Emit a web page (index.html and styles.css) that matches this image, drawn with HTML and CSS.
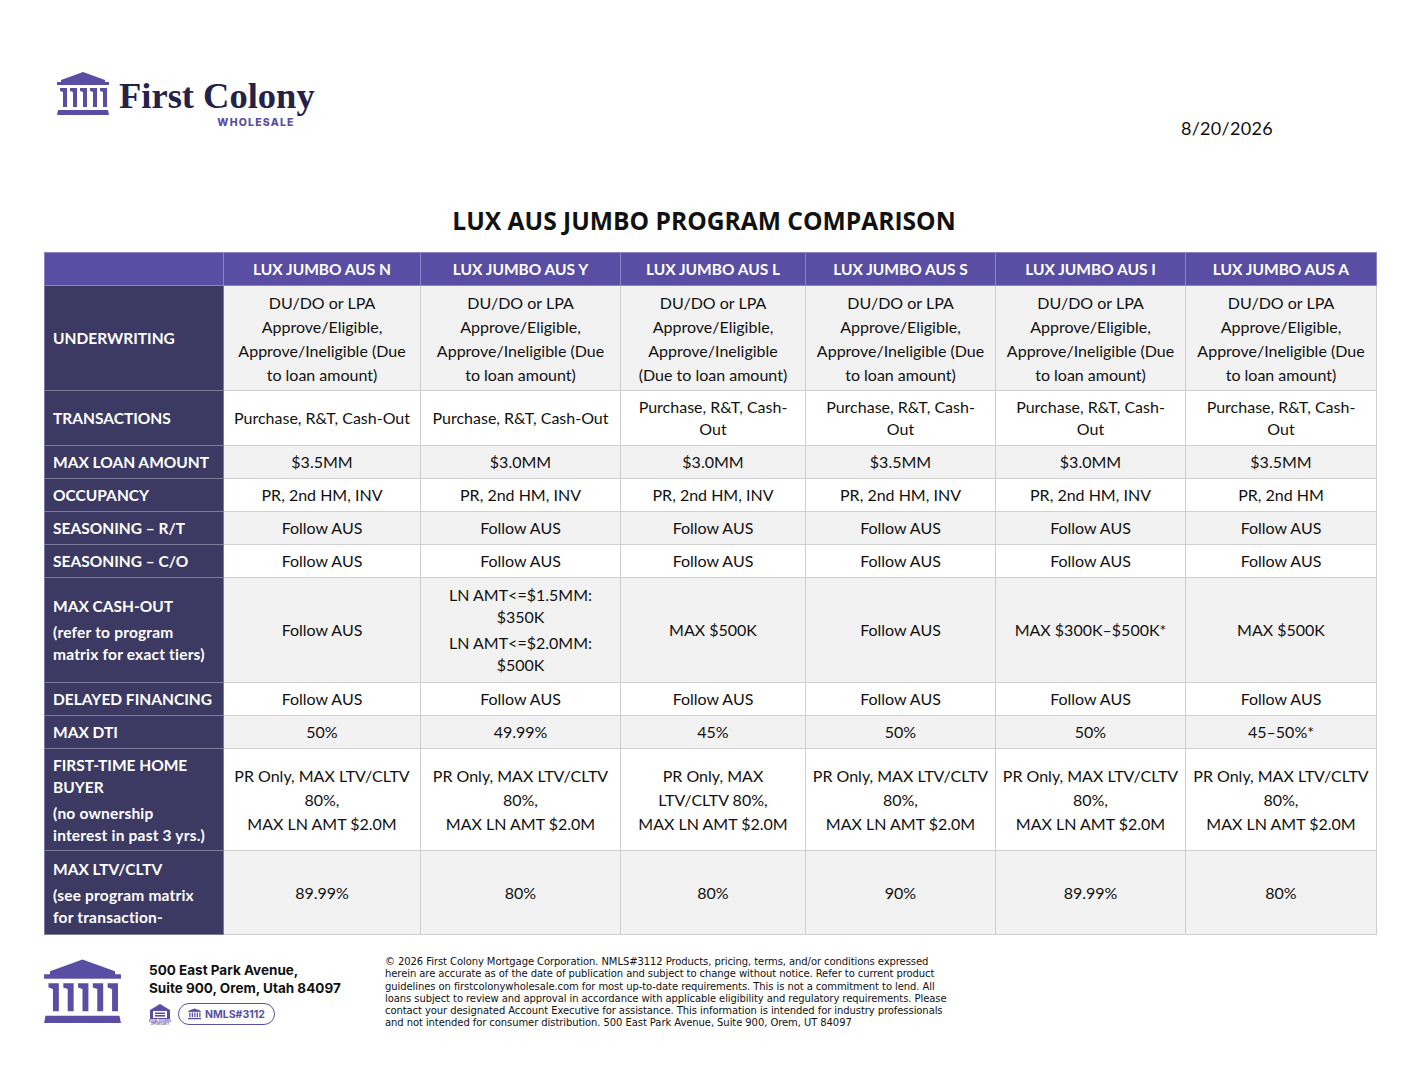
FILE: index.html
```html
<!DOCTYPE html>
<html>
<head>
<meta charset="utf-8">
<link rel="stylesheet" href="styles.css">
</head>
<body>
<div class="page">
  <header class="top">
    <div class="logo">
      <svg class="logo-icon" viewBox="0 0 52 46" width="52" height="46">
        <g fill="#5a4ea4">
          <polygon points="4,9 26,1 48,9 48,13 4,13"/>
          <rect x="0" y="11" width="52" height="3"/>
          <polygon points="3,17 10,17 10,36 6,36 6,21 3,20"/>
          <polygon points="13,17 20,17 20,36 16,36 16,21 13,20"/>
          <polygon points="23,17 30,17 30,36 26,36 26,21 23,20"/>
          <polygon points="33,17 40,17 40,36 36,36 36,21 33,20"/>
          <polygon points="43,17 50,17 50,36 46,36 46,21 43,20"/>
          <polygon points="1,39 51,39 52,44 0,44"/>
        </g>
      </svg>
      <div class="logo-text">
        <div class="brand">First Colony</div>
        <div class="sub">WHOLESALE</div>
      </div>
    </div>
    <div class="date">8/20/2026</div>
  </header>

  <h1 class="title">LUX AUS JUMBO PROGRAM COMPARISON</h1>

  <table class="grid">
    <colgroup>
      <col class="c0"><col class="c1"><col class="c2"><col class="c3"><col class="c4"><col class="c5"><col class="c6">
    </colgroup>
    <thead>
      <tr class="h-head">
        <th class="corner"></th>
        <th>LUX JUMBO AUS N</th>
        <th>LUX JUMBO AUS Y</th>
        <th>LUX JUMBO AUS L</th>
        <th>LUX JUMBO AUS S</th>
        <th>LUX JUMBO AUS I</th>
        <th>LUX JUMBO AUS A</th>
      </tr>
    </thead>
    <tbody>
      <tr class="gray h-uw">
        <th class="lbl">UNDERWRITING</th>
        <td class="uw">DU/DO or LPA<br>Approve/Eligible,<br>Approve/Ineligible (Due<br>to loan amount)</td>
        <td class="uw">DU/DO or LPA<br>Approve/Eligible,<br>Approve/Ineligible (Due<br>to loan amount)</td>
        <td class="uw">DU/DO or LPA<br>Approve/Eligible,<br>Approve/Ineligible<br>(Due to loan amount)</td>
        <td class="uw">DU/DO or LPA<br>Approve/Eligible,<br>Approve/Ineligible (Due<br>to loan amount)</td>
        <td class="uw">DU/DO or LPA<br>Approve/Eligible,<br>Approve/Ineligible (Due<br>to loan amount)</td>
        <td class="uw">DU/DO or LPA<br>Approve/Eligible,<br>Approve/Ineligible (Due<br>to loan amount)</td>
      </tr>
      <tr class="h-tr">
        <th class="lbl">TRANSACTIONS</th>
        <td>Purchase, R&amp;T, Cash-Out</td>
        <td>Purchase, R&amp;T, Cash-Out</td>
        <td>Purchase, R&amp;T, Cash-<br>Out</td>
        <td>Purchase, R&amp;T, Cash-<br>Out</td>
        <td>Purchase, R&amp;T, Cash-<br>Out</td>
        <td>Purchase, R&amp;T, Cash-<br>Out</td>
      </tr>
      <tr class="gray h-s">
        <th class="lbl">MAX LOAN AMOUNT</th>
        <td>$3.5MM</td><td>$3.0MM</td><td>$3.0MM</td><td>$3.5MM</td><td>$3.0MM</td><td>$3.5MM</td>
      </tr>
      <tr class="h-s">
        <th class="lbl">OCCUPANCY</th>
        <td>PR, 2nd HM, INV</td><td>PR, 2nd HM, INV</td><td>PR, 2nd HM, INV</td><td>PR, 2nd HM, INV</td><td>PR, 2nd HM, INV</td><td>PR, 2nd HM</td>
      </tr>
      <tr class="gray h-s">
        <th class="lbl">SEASONING – R/T</th>
        <td>Follow AUS</td><td>Follow AUS</td><td>Follow AUS</td><td>Follow AUS</td><td>Follow AUS</td><td>Follow AUS</td>
      </tr>
      <tr class="h-s">
        <th class="lbl">SEASONING – C/O</th>
        <td>Follow AUS</td><td>Follow AUS</td><td>Follow AUS</td><td>Follow AUS</td><td>Follow AUS</td><td>Follow AUS</td>
      </tr>
      <tr class="gray h-co">
        <th class="lbl"><div class="l1">MAX CASH-OUT</div><div class="l2">(refer to program<br>matrix for exact tiers)</div></th>
        <td>Follow AUS</td>
        <td><div class="p">LN AMT&lt;=$1.5MM:<br>$350K</div><div class="p p2">LN AMT&lt;=$2.0MM:<br>$500K</div></td>
        <td>MAX $500K</td>
        <td>Follow AUS</td>
        <td>MAX $300K–$500K*</td>
        <td>MAX $500K</td>
      </tr>
      <tr class="h-s">
        <th class="lbl">DELAYED FINANCING</th>
        <td>Follow AUS</td><td>Follow AUS</td><td>Follow AUS</td><td>Follow AUS</td><td>Follow AUS</td><td>Follow AUS</td>
      </tr>
      <tr class="gray h-s">
        <th class="lbl">MAX DTI</th>
        <td>50%</td><td>49.99%</td><td>45%</td><td>50%</td><td>50%</td><td>45–50%*</td>
      </tr>
      <tr class="h-ft">
        <th class="lbl"><div class="l1">FIRST-TIME HOME<br>BUYER</div><div class="l2">(no ownership<br>interest in past 3 yrs.)</div></th>
        <td>PR Only, MAX LTV/CLTV<br>80%,<br>MAX LN AMT $2.0M</td>
        <td>PR Only, MAX LTV/CLTV<br>80%,<br>MAX LN AMT $2.0M</td>
        <td>PR Only, MAX<br>LTV/CLTV 80%,<br>MAX LN AMT $2.0M</td>
        <td>PR Only, MAX LTV/CLTV<br>80%,<br>MAX LN AMT $2.0M</td>
        <td>PR Only, MAX LTV/CLTV<br>80%,<br>MAX LN AMT $2.0M</td>
        <td>PR Only, MAX LTV/CLTV<br>80%,<br>MAX LN AMT $2.0M</td>
      </tr>
      <tr class="gray h-ltv">
        <th class="lbl"><div class="l1">MAX LTV/CLTV</div><div class="l2">(see program matrix<br>for transaction-</div></th>
        <td>89.99%</td><td>80%</td><td>80%</td><td>90%</td><td>89.99%</td><td>80%</td>
      </tr>
    </tbody>
  </table>

  <footer class="foot">
    <svg class="foot-icon" viewBox="0 0 52 46" width="77" height="68">
      <g fill="#5a4ea4">
        <polygon points="4,9 26,1 48,9 48,13 4,13"/>
        <rect x="0" y="11" width="52" height="3"/>
        <polygon points="3,17 10,17 10,36 6,36 6,21 3,20"/>
        <polygon points="13,17 20,17 20,36 16,36 16,21 13,20"/>
        <polygon points="23,17 30,17 30,36 26,36 26,21 23,20"/>
        <polygon points="33,17 40,17 40,36 36,36 36,21 33,20"/>
        <polygon points="43,17 50,17 50,36 46,36 46,21 43,20"/>
        <polygon points="1,39 51,39 52,44 0,44"/>
      </g>
    </svg>
    <div class="addr">
      <div class="addr-text">500 East Park Avenue,<br>Suite 900, Orem, Utah 84097</div>
      <div class="badges">
        <svg class="eho" viewBox="0 0 22 22" width="22" height="22">
          <path d="M11 1 L21 7 V16 H1 V7 Z" fill="#5a4ea4"/>
          <rect x="4" y="8" width="14" height="7" fill="#fff"/>
          <rect x="6" y="9.5" width="10" height="1.6" fill="#5a4ea4"/>
          <rect x="6" y="12" width="10" height="1.6" fill="#5a4ea4"/>
          <text x="11" y="19" font-size="2.6" text-anchor="middle" fill="#5a4ea4" font-family="Liberation Sans, sans-serif" font-weight="700">EQUAL HOUSING</text>
          <text x="11" y="21.6" font-size="2.6" text-anchor="middle" fill="#5a4ea4" font-family="Liberation Sans, sans-serif" font-weight="700">OPPORTUNITY</text>
        </svg>
        <div class="pill">
          <svg viewBox="0 0 52 46" width="13" height="12">
            <g fill="#5a4ea4">
              <polygon points="4,9 26,1 48,9 48,13 4,13"/>
              <rect x="0" y="11" width="52" height="3"/>
              <rect x="5" y="17" width="5" height="19"/>
              <rect x="15" y="17" width="5" height="19"/>
              <rect x="25" y="17" width="5" height="19"/>
              <rect x="35" y="17" width="5" height="19"/>
              <rect x="45" y="17" width="5" height="19"/>
              <rect x="0" y="39" width="52" height="5"/>
            </g>
          </svg>
          <span>NMLS#3112</span>
        </div>
      </div>
    </div>
    <p class="disc">© 2026 First Colony Mortgage Corporation. NMLS#3112 Products, pricing, terms, and/or conditions expressed<br>herein are accurate as of the date of publication and subject to change without notice. Refer to current product<br>guidelines on firstcolonywholesale.com for most up-to-date requirements. This is not a commitment to lend. All<br>loans subject to review and approval in accordance with applicable eligibility and regulatory requirements. Please<br>contact your designated Account Executive for assistance. This information is intended for industry professionals<br>and not intended for consumer distribution. 500 East Park Avenue, Suite 900, Orem, UT 84097</p>
  </footer>
</div>
</body>
</html>
```

FILE: styles.css
```css
* { box-sizing: border-box; }
html, body { margin: 0; padding: 0; background: #fff; }
body { font-family: Lato, "Open Sans", sans-serif; color: #111; }

.page {
  width: 1408px;
  padding: 70px 32px 0 44px;
}

.top {
  display: flex;
  justify-content: space-between;
  align-items: flex-start;
  height: 137px;
}
.logo {
  display: flex;
  align-items: flex-start;
  gap: 10px;
  margin-left: 13px;
}
.logo-icon { display: block; margin-top: 1px; }
.logo-text { position: relative; }
.brand {
  font-family: "Liberation Serif", "DejaVu Serif", serif;
  font-weight: 700;
  font-size: 36.5px;
  line-height: 34px;
  color: #25224a;
  margin-top: 9px;
}
.sub {
  font-family: Inter, "DejaVu Sans", sans-serif;
  font-weight: 800;
  font-size: 10.5px;
  line-height: 13px;
  letter-spacing: 1.2px;
  color: #5a4ea4;
  text-align: right;
  margin-right: 20px;
  margin-top: 3px;
}
.date {
  font-size: 18px;
  color: #111;
  margin-top: 47px;
  margin-right: 103px;
  letter-spacing: 0.3px;
}

.title {
  margin: 0;
  padding-right: 12px;
  text-align: center;
  font-family: "Open Sans", Lato, sans-serif;
  font-weight: 700;
  font-size: 24.6px;
  line-height: 28px;
  height: 45px;
  color: #111;
}

.grid {
  width: 1332px;
  border-collapse: collapse;
  table-layout: fixed;
  border: 1px solid #b5b5b5;
}
.c0 { width: 179px; }
.c1 { width: 197px; }
.c2 { width: 200px; }
.c3 { width: 185px; }
.c4 { width: 190px; }
.c5 { width: 190px; }
.c6 { width: 191px; }

.grid th, .grid td {
  padding: 0 2px;
  border: 1px solid #cfcfcf;
  font-size: 16px;
  line-height: 22px;
  text-align: center;
  vertical-align: middle;
  font-weight: 400;
}
.grid thead th {
  background: #5a4ea4;
  color: #fff;
  font-weight: 700;
  font-size: 15.5px;
  border-color: #8b83c4;
}
.grid th.lbl {
  background: #3c3a62;
  color: #fff;
  font-weight: 700;
  text-align: left;
  padding-left: 8px;
  border-color: #7d7b9c;
  font-size: 15.5px;
}
.gray td { background: #f2f2f2; }

.h-head { height: 33px; }
.h-uw { height: 105px; }
.h-tr { height: 55px; }
.h-s { height: 33px; }
.h-co { height: 105px; }
.h-ft { height: 102px; }
.h-ltv { height: 84px; }

td.uw { line-height: 24px; padding-top: 1px; }
.l2 { margin-top: 4px; letter-spacing: 0.2px; }
.p2 { margin-top: 4px; }
.h-ft td { line-height: 24px; }

.foot {
  display: flex;
  align-items: flex-start;
  margin-top: 21px;
}
.foot-icon { display: block; margin-top: 2px; }
.addr {
  margin-left: 28px;
  width: 236px;
  margin-top: 5px;
}
.addr-text {
  font-family: Inter, "DejaVu Sans", sans-serif;
  font-weight: 700;
  font-size: 13.5px;
  line-height: 18px;
  color: #111;
}
.badges {
  display: flex;
  align-items: center;
  gap: 7px;
  margin-top: 6px;
}
.eho { display: block; }
.pill {
  display: flex;
  align-items: center;
  gap: 4px;
  border: 1.5px solid #5a4ea4;
  border-radius: 12px;
  height: 22px;
  padding: 0 9px;
  font-family: Inter, "DejaVu Sans", sans-serif;
  font-weight: 700;
  font-size: 10.5px;
  color: #5a4ea4;
}
.disc {
  margin: 0;
  font-family: "DejaVu Sans", Inter, sans-serif;
  font-size: 10px;
  line-height: 12.3px;
  color: #111;
  white-space: nowrap;
  letter-spacing: -0.08px;
}
```
